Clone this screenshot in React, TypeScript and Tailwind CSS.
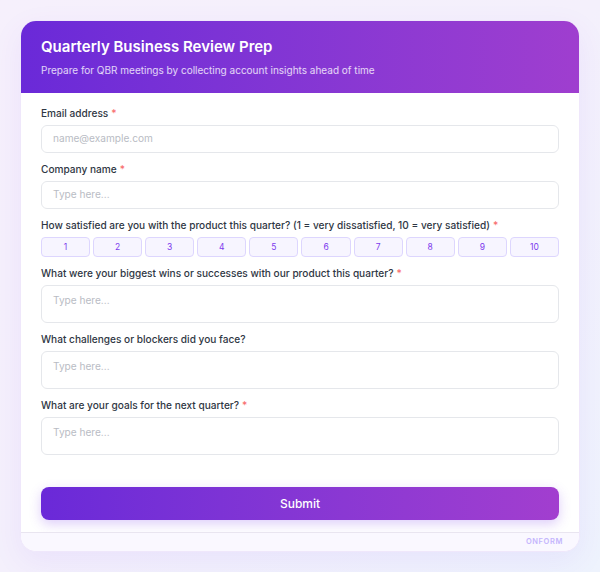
import React from "react";

function Label({ text, required }: { text: string; required?: boolean }) {
  return (
    <div className="text-[10.1px] leading-4 font-medium text-[#2f3744] mb-1">
      {text}
      {required && <span className="text-[#f87171] ml-[3px]">*</span>}
    </div>
  );
}

export default function App() {
  const nums = [1, 2, 3, 4, 5, 6, 7, 8, 9, 10];
  return (
    <div
      className="w-[600px] h-[572px] bg-gradient-to-br from-[#f6f0fc] via-[#f4f0fc] to-[#eef3fd] pt-5 px-5"
      style={{ fontFamily: "Inter, 'Noto Sans', sans-serif" }}
    >
      <div className="w-[560px] bg-white rounded-2xl overflow-hidden border border-[#efe7fb] shadow-[0_10px_30px_rgba(124,58,237,0.08)]">
        <div className="h-[72px] bg-gradient-to-r from-[#6a29d8] to-[#9f3ecf] px-5 pt-[16px]">
          <div className="text-[15px] leading-5 font-semibold text-white">
            Quarterly Business Review Prep
          </div>
          <div className="text-[10px] leading-4 text-white/80 mt-[5px]">
            Prepare for QBR meetings by collecting account insights ahead of time
          </div>
        </div>
        <div className="px-5 pt-3">
          <div className="flex flex-col gap-2">
            <div>
              <Label text="Email address" required />
              <div className="h-[28px] rounded-md border border-[#e5e7eb] px-[11px] flex items-center text-[10.1px] text-[#b9bcc4]">
                name@example.com
              </div>
            </div>
            <div>
              <Label text="Company name" required />
              <div className="h-[28px] rounded-md border border-[#e5e7eb] px-[11px] flex items-center text-[10.1px] text-[#b9bcc4]">
                Type here...
              </div>
            </div>
            <div>
              <Label
                text="How satisfied are you with the product this quarter? (1 = very dissatisfied, 10 = very satisfied)"
                required
              />
              <div className="grid grid-cols-10 gap-[3px]">
                {nums.map((n) => (
                  <div
                    key={n}
                    className="h-[20px] rounded-[4px] border border-[#ddd6fe] bg-[#f7f5ff] flex items-center justify-center text-[8.5px] text-[#7c3aed]"
                  >
                    {n}
                  </div>
                ))}
              </div>
            </div>
            <div>
              <Label
                text="What were your biggest wins or successes with our product this quarter?"
                required
              />
              <div className="h-[38px] rounded-md border border-[#e5e7eb] px-[11px] pt-[6px] text-[10.1px] leading-4 text-[#b9bcc4]">
                Type here...
              </div>
            </div>
            <div>
              <Label text="What challenges or blockers did you face?" />
              <div className="h-[38px] rounded-md border border-[#e5e7eb] px-[11px] pt-[6px] text-[10.1px] leading-4 text-[#b9bcc4]">
                Type here...
              </div>
            </div>
            <div>
              <Label text="What are your goals for the next quarter?" required />
              <div className="h-[38px] rounded-md border border-[#e5e7eb] px-[11px] pt-[6px] text-[10.1px] leading-4 text-[#b9bcc4]">
                Type here...
              </div>
            </div>
          </div>
          <div className="mt-8 mb-3 h-[33px] rounded-lg bg-gradient-to-r from-[#6a29d8] to-[#a23ecf] flex items-center justify-center text-white text-[12px] font-medium shadow-[0_4px_12px_rgba(124,58,237,0.25)]">
            Submit
          </div>
        </div>
        <div className="border-t border-[#e9e5f0] bg-[#faf8ff] h-[19px] flex items-center justify-end pr-4">
          <span className="text-[7.5px] font-semibold tracking-[0.08em] text-[#c4b5fd]">ONFORM</span>
        </div>
      </div>
    </div>
  );
}
